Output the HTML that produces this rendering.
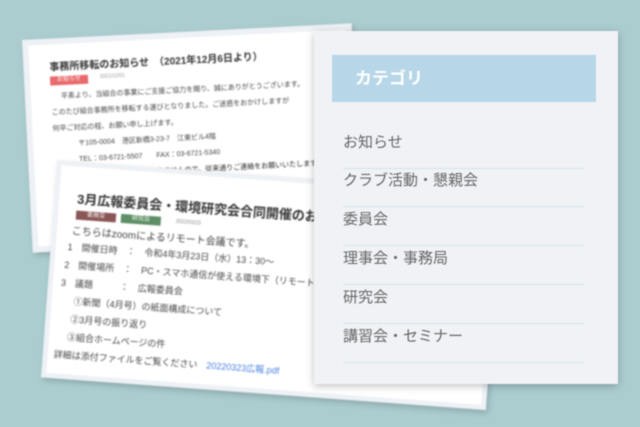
<!DOCTYPE html>
<html><head><meta charset="utf-8"><style>
*{margin:0;padding:0;box-sizing:border-box}
body{width:640px;height:427px;overflow:hidden;background:#abcdd0;position:relative;font-family:"Liberation Sans","Noto Sans CJK JP",sans-serif;}
.card{position:absolute;background:#fff;transform-origin:0 0;box-shadow:2px 3px 6px rgba(0,0,0,.18);filter:blur(0.9px);border:6px solid #eef1f5}
.card p{position:absolute;white-space:nowrap;color:#444}
#back{left:22px;top:40px;width:330px;height:213px;transform:rotate(-2.9deg)}
#front{left:57px;top:160px;width:446px;height:218px;transform:rotate(4.2deg);border-width:5px}
.tag{position:absolute;color:#fff;font-size:6px;text-align:center;line-height:9px}
#panel{position:absolute;left:314px;top:31px;width:304px;height:353px;background:#f0f2f6;box-shadow:0 2px 8px rgba(0,0,0,.25);filter:blur(0.5px)}
#hd{position:absolute;left:18px;top:24px;width:264px;height:47px;background:#b7d7e8;color:#fff;font-size:17px;font-weight:bold;line-height:47px;padding-left:23px}
.it{position:absolute;left:29px;width:241px;font-size:15px;color:#666;border-bottom:1px solid #d5e3ee;height:38px;line-height:24px}
</style></head><body>
<div class="card" id="back">
<p style="left:20px;top:14px;font-size:10px;font-weight:bold;color:#333">事務所移転のお知らせ　（2021年12月6日より）</p>
<div class="tag" style="left:20px;top:32px;width:38px;background:#e86a6a">お知らせ</div>
<p style="left:70px;top:32px;font-size:5px;color:#999">2021/12/01</p>
<p style="left:30px;top:47px;font-size:7px">平素より、当組合の事業にご支援ご協力を賜り、誠にありがとうございます。</p>
<p style="left:20px;top:63px;font-size:7px">このたび組合事務所を移転する運びとなりました。ご迷惑をおかけしますが</p>
<p style="left:20px;top:79px;font-size:7px">何卒ご対応の程、お願い申し上げます。</p>
<p style="left:45px;top:95px;font-size:7px">〒105-0004　港区新橋3-23-7　江東ビル4階</p>
<p style="left:45px;top:111px;font-size:7px">TEL：03-6721-5507　　FAX：03-6721-5340</p>
<p style="left:45px;top:127px;font-size:7px;color:#222">※メールアドレスは変わりませんので、従来通りご連絡をお願いいたします</p>
</div>
<div class="card" id="front">
<p style="left:18px;top:22px;font-size:13px;font-weight:bold;color:#333">3月広報委員会・環境研究会合同開催のお知らせ</p>
<div class="tag" style="left:18px;top:44px;width:40px;background:#8a5656">委員会</div>
<div class="tag" style="left:63px;top:44px;width:40px;background:#5e8f66">研究会</div>
<p style="left:118px;top:45px;font-size:5px;color:#888">2022/03/23</p>
<p style="left:15px;top:56px;font-size:10px">こちらはzoomによるリモート会議です。</p>
<p style="left:12px;top:74px;font-size:9px">1　開催日時　：　令和4年3月23日（水）13：30～</p>
<p style="left:10px;top:92px;font-size:9px">2　開催場所　：　PC・スマホ通信が使える環境下（リモート）</p>
<p style="left:8px;top:110px;font-size:9px">3　議題　　　：　広報委員会</p>
<p style="left:22px;top:128px;font-size:9px">①新聞（4月号）の紙面構成について</p>
<p style="left:20px;top:146px;font-size:9px">②3月号の振り返り</p>
<p style="left:18px;top:164px;font-size:9px">③組合ホームページの件</p>
<p style="left:6px;top:182px;font-size:9px">詳細は添付ファイルをご覧ください　<span style="color:#4a7fe0">20220323広報.pdf</span></p>
</div>
<div id="panel">
<div id="hd">カテゴリ</div>
<div class="it" style="top:100px">お知らせ</div>
<div class="it" style="top:138px">クラブ活動・懇親会</div>
<div class="it" style="top:177px">委員会</div>
<div class="it" style="top:216px">理事会・事務局</div>
<div class="it" style="top:255px">研究会</div>
<div class="it" style="top:294px">講習会・セミナー</div>
</div>
</body></html>
